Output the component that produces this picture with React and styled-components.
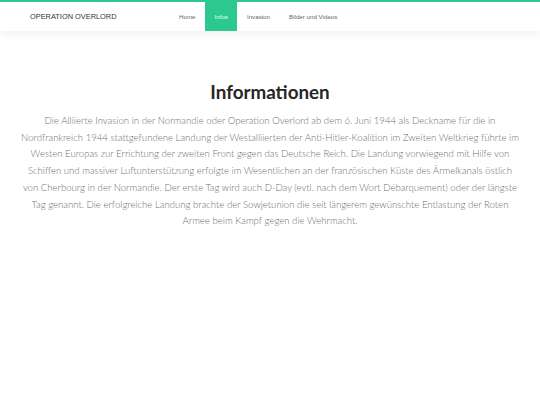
import React from "react";
import styled, { createGlobalStyle } from "styled-components";

const GlobalStyle = createGlobalStyle`
  html, body {
    margin: 0;
    padding: 0;
    background: #fff;
  }
  body {
    font-family: "Lato", "Liberation Sans", sans-serif;
  }
`;

const links = [
  { label: "Home" },
  { label: "Infos", active: true },
  { label: "Invasion" },
  { label: "Bilder und Videos" },
];

// Zeilen wie im Original umbrechen
const lines = [
  "Die Alliierte Invasion in der Normandie oder Operation Overlord ab dem 6. Juni 1944 als Deckname für die in",
  "Nordfrankreich 1944 stattgefundene Landung der Westalliierten der Anti-Hitler-Koalition im Zweiten Weltkrieg führte im",
  "Westen Europas zur Errichtung der zweiten Front gegen das Deutsche Reich. Die Landung vorwiegend mit Hilfe von",
  "Schiffen und massiver Luftunterstützung erfolgte im Wesentlichen an der französischen Küste des Ärmelkanals östlich",
  "von Cherbourg in der Normandie. Der erste Tag wird auch D-Day (evtl. nach dem Wort Débarquement) oder der längste",
  "Tag genannt. Die erfolgreiche Landung brachte der Sowjetunion die seit längerem gewünschte Entlastung der Roten",
  "Armee beim Kampf gegen die Wehrmacht.",
];

const Header = styled.header`
  border-top: 2px solid #2bc990;
  background: #fff;
  box-shadow: 0 3px 8px rgba(0, 0, 0, 0.06);
`;

const NavInner = styled.nav`
  width: 480px;
  margin: 0 auto;
  display: flex;
  align-items: stretch;
  height: 29px;
`;

const Brand = styled.a`
  display: flex;
  align-items: center;
  font-family: "Liberation Sans", Arial, sans-serif;
  font-size: 7.4px;
  font-weight: 500;
  color: #333;
  text-decoration: none;
  margin-right: 53px;
`;

const Links = styled.ul`
  display: flex;
  list-style: none;
  margin: 0;
  padding: 0;
`;

const LinkItem = styled.li`
  display: flex;
  align-items: center;
  padding: 0 9.5px;
  font-family: "Liberation Sans", Arial, sans-serif;
  font-size: 6.2px;
  color: ${(p) => (p.$active ? "#e8fbf3" : "#666")};
  background: ${(p) => (p.$active ? "#2bc990" : "transparent")};
`;

const Section = styled.section`
  width: 520px;
  margin: 0 auto;
  padding-top: 49px;
  text-align: center;
`;

const Title = styled.h1`
  margin: 0 0 10px;
  font-family: "Lato", sans-serif;
  font-size: 18.8px;
  font-weight: 700;
  color: #262626;
`;

const Text = styled.p`
  margin: 0;
  font-family: "Lato", sans-serif;
  font-size: 9.6px;
  font-weight: 300;
  line-height: 16.7px;
  color: #6f6f6f;
`;

const Line = styled.span`
  display: block;
  white-space: nowrap;
`;

export default function App() {
  return (
    <>
      <GlobalStyle />
      <Header>
        <NavInner>
          <Brand href="#">OPERATION OVERLORD</Brand>
          <Links>
            {links.map((l) => (
              <LinkItem key={l.label} $active={l.active}>
                {l.label}
              </LinkItem>
            ))}
          </Links>
        </NavInner>
      </Header>
      <Section>
        <Title>Informationen</Title>
        <Text>
          {lines.map((t, i) => (
            <Line key={i}>{t}</Line>
          ))}
        </Text>
      </Section>
    </>
  );
}
